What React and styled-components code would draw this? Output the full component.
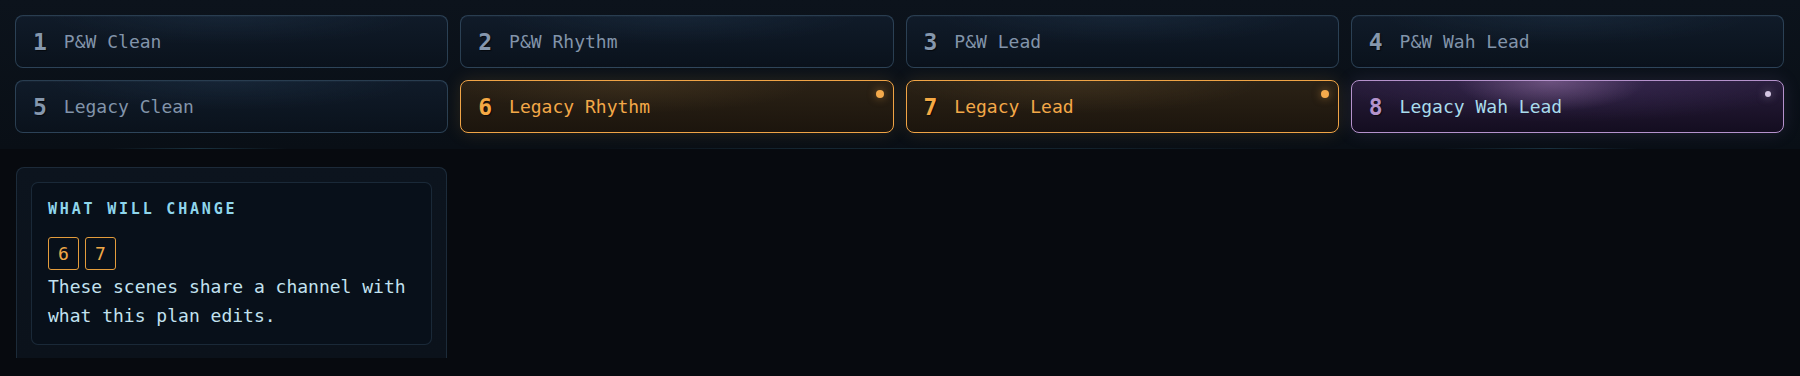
import React from 'react';
import styled, { createGlobalStyle, css } from 'styled-components';

const GlobalStyle = createGlobalStyle`
  html, body {
    margin: 0;
    padding: 0;
    background: #070a0f;
  }
  body {
    font-family: "DejaVu Sans Mono", "Liberation Mono", monospace;
    -webkit-font-smoothing: antialiased;
  }
  * { box-sizing: border-box; }
`;

const Page = styled.div`
  width: 1800px;
  height: 376px;
  overflow: hidden;
  background: #070a0f;
`;

const SceneStrip = styled.div`
  position: relative;
  display: grid;
  grid-template-columns: repeat(4, 1fr);
  gap: 12px;
  padding: 15px 16px 16px 15px;
  background: linear-gradient(180deg, #0c131c 0%, #090f16 100%);

  &::after {
    content: '';
    position: absolute;
    left: 0;
    right: 0;
    bottom: 0;
    height: 1px;
    background: linear-gradient(
      90deg,
      transparent 6%,
      rgba(70, 140, 170, 0.28) 11%,
      transparent 16%,
      transparent 33%,
      rgba(70, 140, 170, 0.2) 45%,
      rgba(70, 140, 170, 0.16) 60%,
      transparent 72%,
      transparent 80%,
      rgba(70, 140, 170, 0.28) 86%,
      transparent 91%
    );
  }
`;

const tones = {
  idle: css`
    border: 1px solid rgba(80, 115, 145, 0.45);
    background:
      radial-gradient(ellipse 60% 80% at 50% 0%, rgba(40, 65, 90, 0.25), transparent 70%),
      linear-gradient(180deg, #101b29 0%, #0a121c 100%);
    box-shadow: inset 0 1px 0 rgba(120, 160, 190, 0.06);
  `,
  amber: css`
    border: 1px solid #f0a446;
    background:
      radial-gradient(ellipse 60% 90% at 40% 0%, rgba(90, 70, 40, 0.35), transparent 70%),
      linear-gradient(180deg, #2b2216 0%, #1c150d 100%);
    box-shadow: 0 0 18px rgba(240, 160, 60, 0.14);
  `,
  violet: css`
    border: 1px solid #b592cc;
    background:
      radial-gradient(ellipse 22% 60% at 46% 0%, rgba(150, 115, 165, 0.55), transparent 100%),
      radial-gradient(ellipse 70% 100% at 50% 0%, rgba(70, 50, 100, 0.5), transparent 80%),
      linear-gradient(180deg, #281d3b 0%, #140d20 100%);
    box-shadow: 0 0 18px rgba(160, 120, 200, 0.14);
  `,
};

const numberColors = { idle: '#8597ad', amber: '#f5a944', violet: '#b393cc' };
const labelColors = { idle: '#8294aa', amber: '#f3a848', violet: '#a9dcec' };
const dotColors = { amber: '#f5aa4c', violet: '#d4c6e2' };

const SceneCard = styled.div`
  position: relative;
  height: 53px;
  display: flex;
  align-items: center;
  gap: 17px;
  padding: 0 17px;
  border-radius: 8px;
  ${({ $tone }) => tones[$tone]}
`;

const SceneNumber = styled.span`
  font-size: 23px;
  font-weight: bold;
  color: ${({ $tone }) => numberColors[$tone]};
  text-shadow: 1px 1px 1px rgba(0, 0, 0, 0.6);
`;

const SceneLabel = styled.span`
  font-size: 18px;
  color: ${({ $tone }) => labelColors[$tone]};
`;

const StatusDot = styled.span`
  position: absolute;
  top: ${({ $tone }) => ($tone === 'violet' ? '10px' : '9px')};
  right: ${({ $tone }) => ($tone === 'violet' ? '12px' : '9px')};
  width: ${({ $tone }) => ($tone === 'violet' ? '6px' : '8px')};
  height: ${({ $tone }) => ($tone === 'violet' ? '6px' : '8px')};
  border-radius: 50%;
  background: ${({ $tone }) => dotColors[$tone]};
  box-shadow: 0 0 8px ${({ $tone }) => dotColors[$tone]}80;
`;

const Body = styled.div`
  padding: 18px 0 0 16px;
`;

const Panel = styled.section`
  width: 431px;
  height: 191px;
  padding: 14px 14px 0 14px;
  background: linear-gradient(180deg, #0c141e 0%, #0b121b 100%);
  border: 1px solid rgba(60, 90, 115, 0.35);
  border-bottom: none;
  border-radius: 8px 8px 0 0;
`;

const ChangeCard = styled.div`
  padding: 16px 16px 14px 16px;
  background: #08101a;
  border: 1px solid rgba(60, 90, 115, 0.35);
  border-radius: 7px;
`;

const ChangeTitle = styled.h4`
  margin: 0 0 18px 0;
  font-size: 15px;
  line-height: 20px;
  font-weight: bold;
  letter-spacing: 2.8px;
  color: #8fd6ec;
`;

const BadgeRow = styled.div`
  display: flex;
  gap: 6px;
`;

const SceneBadge = styled.span`
  width: 31px;
  height: 33px;
  display: flex;
  align-items: center;
  justify-content: center;
  border: 1.5px solid #e39c3c;
  border-radius: 3px;
  font-size: 18px;
  color: #f0a848;
`;

const ChangeText = styled.p`
  margin: 2px 0 0 0;
  font-size: 18px;
  line-height: 29px;
  color: #c2e2f0;
`;

const scenes = [
  { n: 1, label: 'P&W Clean', tone: 'idle' },
  { n: 2, label: 'P&W Rhythm', tone: 'idle' },
  { n: 3, label: 'P&W Lead', tone: 'idle' },
  { n: 4, label: 'P&W Wah Lead', tone: 'idle' },
  { n: 5, label: 'Legacy Clean', tone: 'idle' },
  { n: 6, label: 'Legacy Rhythm', tone: 'amber' },
  { n: 7, label: 'Legacy Lead', tone: 'amber' },
  { n: 8, label: 'Legacy Wah Lead', tone: 'violet' },
];

const affected = [6, 7];

export default function App() {
  return (
    <Page>
      <GlobalStyle />
      <SceneStrip>
        {scenes.map((s) => (
          <SceneCard key={s.n} $tone={s.tone}>
            <SceneNumber $tone={s.tone}>{s.n}</SceneNumber>
            <SceneLabel $tone={s.tone}>{s.label}</SceneLabel>
            {s.tone !== 'idle' && <StatusDot $tone={s.tone} />}
          </SceneCard>
        ))}
      </SceneStrip>
      <Body>
        <Panel>
          <ChangeCard>
            <ChangeTitle>WHAT WILL CHANGE</ChangeTitle>
            <BadgeRow>
              {affected.map((n) => (
                <SceneBadge key={n}>{n}</SceneBadge>
              ))}
            </BadgeRow>
            <ChangeText>These scenes share a channel with what this plan edits.</ChangeText>
          </ChangeCard>
        </Panel>
      </Body>
    </Page>
  );
}
